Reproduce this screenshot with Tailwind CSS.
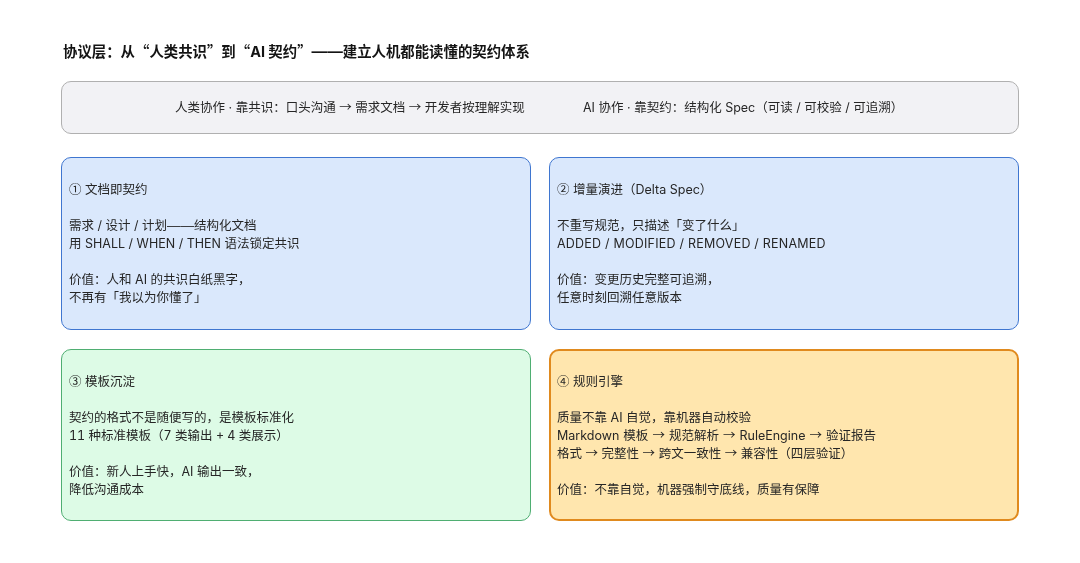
<!DOCTYPE html>
<html lang="zh-CN">
<head>
<meta charset="utf-8">
<script src="https://cdn.jsdelivr.net/npm/@tailwindcss/browser@4"></script>
</head>
<body class="bg-white">
<div class="w-[1080px] h-[563px] overflow-hidden bg-white pl-[61px] pr-[61px] pt-[43px] text-[#262626] text-[12.5px] leading-[18px] font-['Inter','Noto_Sans_CJK_SC',sans-serif] blur-[0.3px]">
  <h1 class="h-[20px] pl-[2px] text-[14.4px] leading-[20px] font-bold text-[#141414] -translate-y-[1px]">协议层：从<span class="leading-none font-['Noto_Sans_CJK_SC']">“</span>人类共识<span class="leading-none font-['Noto_Sans_CJK_SC']">”</span>到<span class="leading-none font-['Noto_Sans_CJK_SC']">“</span>AI 契约<span class="leading-none font-['Noto_Sans_CJK_SC']">”</span><span class="leading-none text-[15.6px] font-['Liberation_Sans']">——</span>建立人机都能读懂的契约体系</h1>
  <div class="mt-[18px] h-[53px] rounded-[10px] border border-[#b0b0b0] bg-[#f2f2f5] flex items-center">
    <span class="ml-[113px] w-[408px] whitespace-pre">人类协作 · 靠共识：口头沟通 <span class="leading-none font-['Noto_Sans_CJK_SC']">→</span> 需求文档 <span class="leading-none font-['Noto_Sans_CJK_SC']">→</span> 开发者按理解实现</span>
    <span class="whitespace-pre">AI 协作 · 靠契约：结构化 Spec（可读 / 可校验 / 可追溯）</span>
  </div>
  <div class="mt-[23px] grid grid-cols-[470px_470px] grid-rows-[173px_172px] gap-x-[18px] gap-y-[19px]">
    <div class="rounded-[10px] border border-[#3f76d0] bg-[#dae8fc] pl-[7px] flex flex-col justify-center">
      <p><span class="leading-none font-['Noto_Sans_CJK_SC']">①</span> 文档即契约</p>
      <p class="mt-[18px]">需求 / 设计 / 计划<span class="leading-none text-[13.5px] font-['Liberation_Sans']">——</span>结构化文档</p>
      <p>用 SHALL / WHEN / THEN 语法锁定共识</p>
      <p class="mt-[18px]">价值：人和 AI 的共识白纸黑字，</p>
      <p>不再有「我以为你懂了」</p>
    </div>
    <div class="rounded-[10px] border border-[#3f76d0] bg-[#dae8fc] pl-[7px] flex flex-col justify-center">
      <p><span class="leading-none font-['Noto_Sans_CJK_SC']">②</span> 增量演进（Delta Spec）</p>
      <p class="mt-[18px]">不重写规范，只描述「变了什么」</p>
      <p class="tracking-[0.22px]">ADDED / MODIFIED / REMOVED / RENAMED</p>
      <p class="mt-[18px]">价值：变更历史完整可追溯，</p>
      <p>任意时刻回溯任意版本</p>
    </div>
    <div class="rounded-[10px] border border-[#4fae72] bg-[#ddfbe6] pl-[7px] pt-[1px] flex flex-col justify-center">
      <p><span class="leading-none font-['Noto_Sans_CJK_SC']">③</span> 模板沉淀</p>
      <p class="mt-[18px]">契约的格式不是随便写的，是模板标准化</p>
      <p class="tabular-nums">11 种标准模板（7 类输出 + 4 类展示）</p>
      <p class="mt-[18px]">价值：新人上手快，AI 输出一致，</p>
      <p>降低沟通成本</p>
    </div>
    <div class="rounded-[10px] border-2 border-[#e08a1e] bg-[#ffe6ae] pl-[6px] pt-[1px] flex flex-col justify-center">
      <p><span class="leading-none font-['Noto_Sans_CJK_SC']">④</span> 规则引擎</p>
      <p class="mt-[18px]">质量不靠 AI 自觉，靠机器自动校验</p>
      <p class="[word-spacing:0.5px]">Markdown 模板 <span class="leading-none font-['Noto_Sans_CJK_SC']">→</span> 规范解析 <span class="leading-none font-['Noto_Sans_CJK_SC']">→</span> RuleEngine <span class="leading-none font-['Noto_Sans_CJK_SC']">→</span> 验证报告</p>
      <p>格式 <span class="leading-none font-['Noto_Sans_CJK_SC']">→</span> 完整性 <span class="leading-none font-['Noto_Sans_CJK_SC']">→</span> 跨文一致性 <span class="leading-none font-['Noto_Sans_CJK_SC']">→</span> 兼容性（四层验证）</p>
      <p class="mt-[18px]">价值：不靠自觉，机器强制守底线，质量有保障</p>
    </div>
  </div>
</div>
</body>
</html>
